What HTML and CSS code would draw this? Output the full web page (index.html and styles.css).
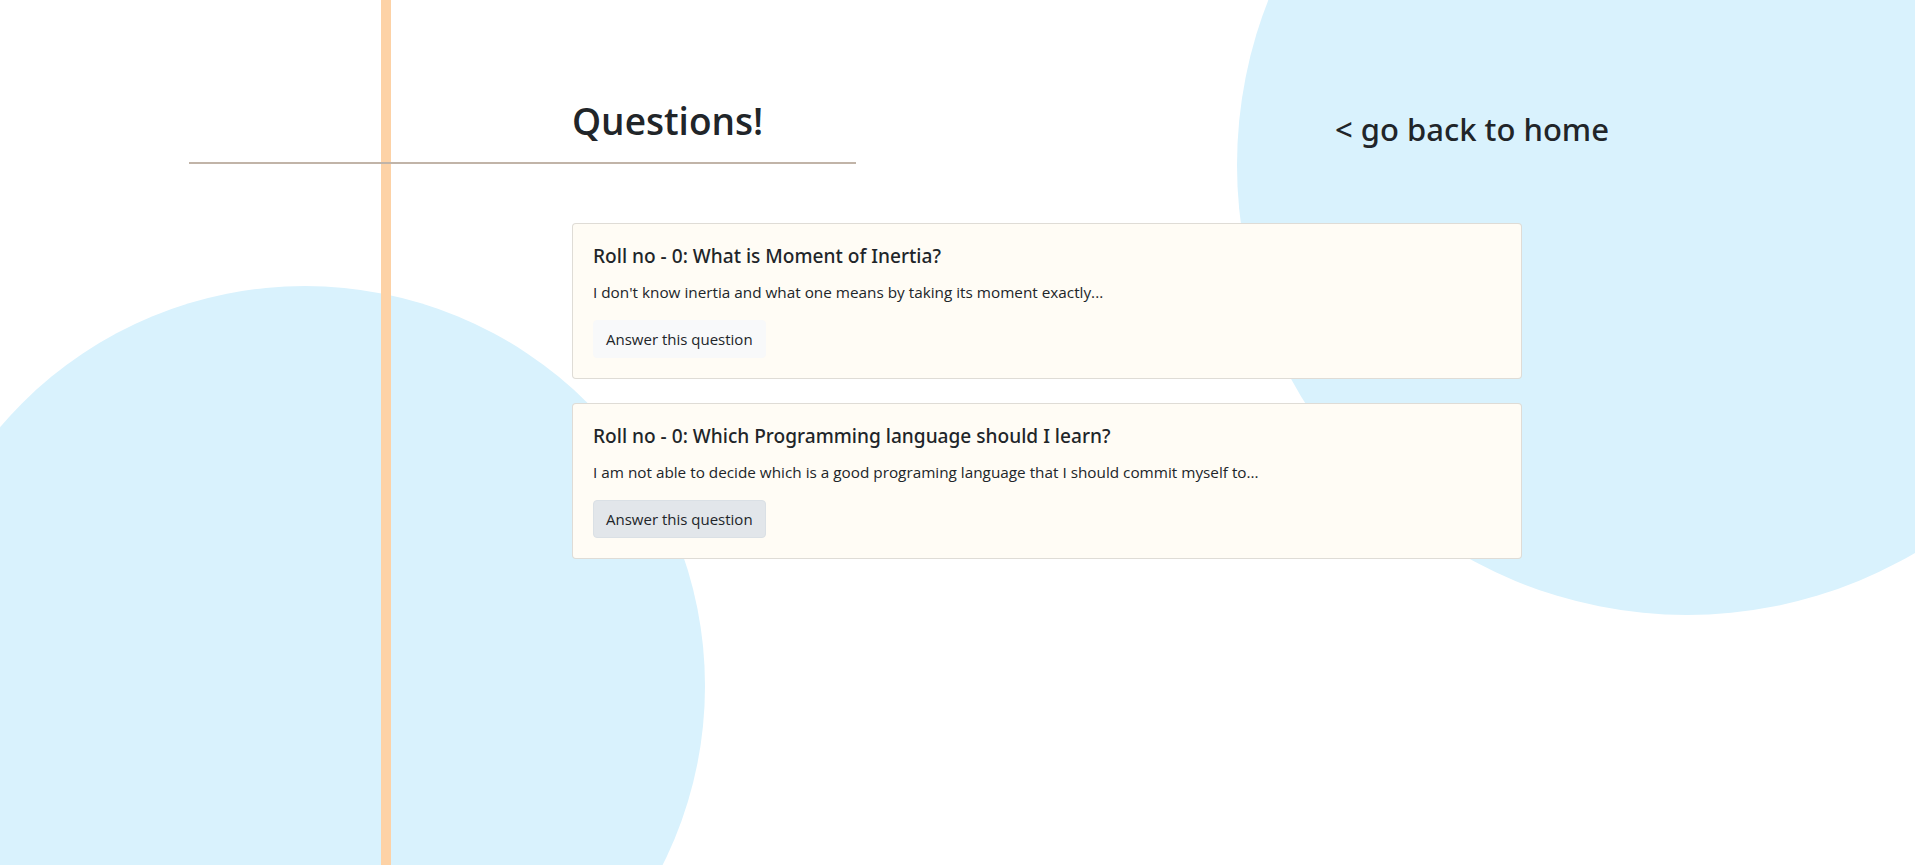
FILE: index.html
```html
<!DOCTYPE html>
<html lang="en">
<head>
<meta charset="utf-8">
<title>Questions!</title>
<link rel="stylesheet" href="styles.css">
</head>
<body>
<div class="page">
  <div class="blob blob-left"></div>
  <div class="blob blob-right"></div>
  <div class="stripe"></div>

  <header class="head">
    <div class="head-main">
      <h1 class="page-title">Questions!</h1>
    </div>
    <a class="back-link" href="#">&lt; go back to home</a>
  </header>

  <main class="questions">
    <div class="card">
      <div class="card-body">
        <h5 class="card-title">Roll no - 0: What is Moment of Inertia?</h5>
        <p class="card-text">I don't know inertia and what one means by taking its moment exactly...</p>
        <button class="btn" type="button">Answer this question</button>
      </div>
    </div>
    <div class="card">
      <div class="card-body">
        <h5 class="card-title">Roll no - 0: Which Programming language should I learn?</h5>
        <p class="card-text">I am not able to decide which is a good programing language that I should commit myself to...</p>
        <button class="btn btn-active" type="button">Answer this question</button>
      </div>
    </div>
  </main>
</div>
</body>
</html>
```

FILE: styles.css
```css
html, body {
  margin: 0;
  padding: 0;
}

body {
  font-family: "Segoe UI", "Open Sans", "Noto Sans", sans-serif;
  color: #212529;
  background: #ffffff;
  font-size: 16px;
  line-height: 1.5;
}

.page {
  position: relative;
  overflow: hidden;
  min-height: 2600px;
}

.blob {
  position: absolute;
  border-radius: 50%;
  background: #d9f2fd;
  z-index: 0;
}

.blob-left {
  left: -95px;
  top: 286px;
  width: 800px;
  height: 800px;
}

.blob-right {
  left: 1237px;
  top: -285px;
  width: 900px;
  height: 900px;
}

.stripe {
  position: absolute;
  left: 381px;
  top: 0;
  bottom: 0;
  width: 10px;
  background: #fdd2a6;
  z-index: 1;
}

.head {
  position: relative;
  z-index: 2;
  display: flex;
  align-items: flex-start;
  padding-top: 97px;
}

.head-main {
  box-sizing: border-box;
  margin-left: 189px;
  width: 667px;
  padding-left: 383px;
  padding-bottom: 17px;
  border-bottom: 2px solid #c1b4a8;
}

.page-title {
  margin: 0;
  font-size: 37px;
  line-height: 48px;
  font-weight: 600;
  white-space: nowrap;
}

.back-link {
  margin-left: 479px;
  margin-top: 13px;
  font-family: "Noto Sans", "Open Sans", sans-serif;
  font-size: 31px;
  line-height: 38px;
  font-weight: 500;
  color: #212529;
  text-decoration: none;
  white-space: nowrap;
}

.questions {
  position: relative;
  z-index: 2;
  margin: 59px 0 0 572px;
  width: 950px;
  display: flex;
  flex-direction: column;
  gap: 24px;
}

.card {
  background: #fffcf5;
  border: 1px solid rgba(0, 0, 0, 0.125);
  border-radius: 4px;
}

.card-body {
  padding: 20px;
}

.card-title {
  margin: 0 0 12px;
  font-family: "Noto Sans", "Open Sans", sans-serif;
  font-size: 19.1px;
  line-height: 24px;
  font-weight: 500;
}

.card-text {
  margin: 0 0 16px;
  font-size: 15.3px;
  line-height: 24px;
}

.btn {
  font-family: inherit;
  font-size: 15px;
  line-height: 24px;
  color: #212529;
  background: #f8f9fa;
  border: 1px solid #f8f9fa;
  border-radius: 4px;
  padding: 6px 12px;
  cursor: pointer;
}

.btn-active {
  background: #e2e6ea;
  border-color: #dae0e5;
}
```
